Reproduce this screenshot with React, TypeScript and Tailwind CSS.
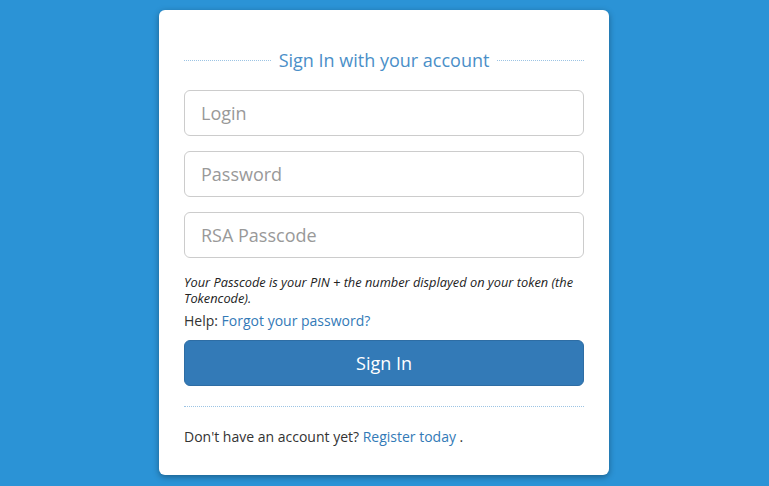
export default function App() {
  const font = { fontFamily: '"Open Sans", "Noto Sans", sans-serif' };
  return (
    <div className="w-[769px] h-[486px] bg-[#2b93d6] overflow-hidden" style={font}>
      <div className="w-[768px] flex justify-center">
        <div className="mt-[10px] w-[450px] h-[465px] bg-white rounded-[6px] shadow-[0_2px_6px_rgba(0,0,0,0.35)] px-[25px] pt-[38px] pb-[28px]">
          <div className="flex items-center gap-[8px] h-[24px]">
            <div className="flex-1 border-t border-dotted border-[#9cc4e4]" />
            <div className="text-[18px] text-[#4a8fc8] leading-[24px]">Sign In with your account</div>
            <div className="flex-1 border-t border-dotted border-[#9cc4e4]" />
          </div>
          <div className="mt-[18px] flex flex-col gap-[15px]">
            {["Login", "Password", "RSA Passcode"].map((p) => (
              <input
                key={p}
                placeholder={p}
                type={p === "Password" ? "password" : "text"}
                className="h-[46px] w-full border border-[#cccccc] rounded-[6px] px-[16px] text-[18px] text-[#555] placeholder:text-[#999] outline-none"
                style={font}
              />
            ))}
          </div>
          <p className="mt-[16px] text-[12.8px] leading-[16px] italic text-[#222]">
            Your Passcode is your PIN + the number displayed on your token (the Tokencode).
          </p>
          <div className="mt-[5px] text-[14px] leading-[20px] text-[#333]">
            Help: <a className="text-[#337ab7]">Forgot your password?</a>
          </div>
          <button
            className="mt-[9px] w-full h-[46px] bg-[#337ab7] border border-[#2e6da4] rounded-[6px] text-white text-[18px]"
            style={font}
          >
            Sign In
          </button>
          <div className="mt-[20px] border-t border-dotted border-[#9cc4e4]" />
          <div className="mt-[20px] text-[14px] leading-[20px] text-[#333]">
            Don't have an account yet? <a className="text-[#337ab7]">Register today</a> .
          </div>
        </div>
      </div>
    </div>
  );
}
